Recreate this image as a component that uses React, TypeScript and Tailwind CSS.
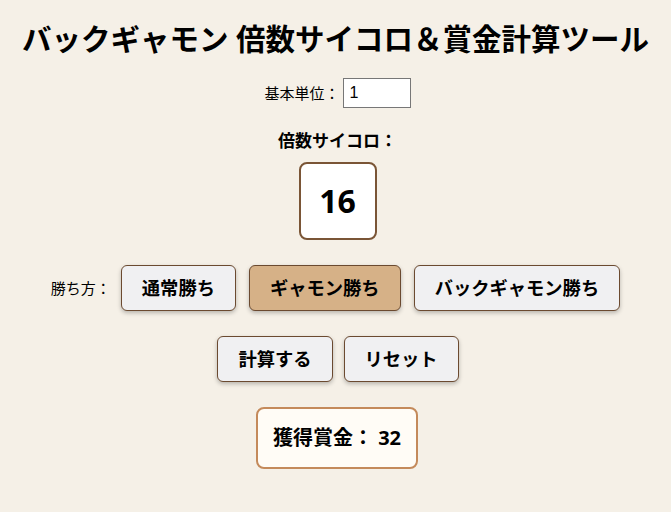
import { useState } from 'react';

const multipliers = { normal: 1, gammon: 2, backgammon: 3 } as const;
type WinType = keyof typeof multipliers;

const winButtons: { key: WinType; label: string }[] = [
    { key: 'normal', label: '通常勝ち' },
    { key: 'gammon', label: 'ギャモン勝ち' },
    { key: 'backgammon', label: 'バックギャモン勝ち' },
];

export default function App() {
    const [unit, setUnit] = useState('1');
    const [cube] = useState(16);
    const [winType, setWinType] = useState<WinType>('gammon');
    const [prize, setPrize] = useState<number | null>(32);

    const calculate = () => {
        const u = Number(unit) || 0;
        setPrize(u * cube * multipliers[winType]);
    };

    const reset = () => {
        setUnit('1');
        setWinType('normal');
        setPrize(null);
    };

    const btn = 'px-5 py-2.5 leading-6 text-[18.3px] font-bold text-black border border-[#6b4a30] rounded-md shadow-[0_2px_4px_rgba(0,0,0,0.25)]';

    return (
        <div className="min-h-screen bg-[#f5f0e7] flex flex-col items-center text-black pb-10" style={{ fontFamily: '"Noto Sans", "Noto Sans CJK JP", sans-serif' }}>
            <h1 className="mt-[21px] text-[29.5px] leading-[36px] font-bold">バックギャモン 倍数サイコロ＆賞金計算ツール</h1>

            <div className="mt-[21px] flex items-center pl-[4px]">
                <span className="text-[15px]" style={{ fontFamily: '"Noto Sans CJK JP", sans-serif' }}>基本単位：</span>
                <input
                    type="number"
                    value={unit}
                    onChange={e => setUnit(e.target.value)}
                    className="ml-[3px] w-[68px] h-[30px] px-[6px] bg-white border border-[#777] text-[16px] outline-none [appearance:textfield]"
                    style={{ fontFamily: '"Liberation Sans", Arial, sans-serif' }}
                />
            </div>

            <div className="mt-[21px] text-[17px] leading-6 font-bold pl-[4px]">倍数サイコロ：</div>
            <div className="mt-[9px] ml-[4px] w-[78px] h-[78px] bg-white border-2 border-[#7a5536] rounded-lg flex items-center justify-center text-[32px] font-bold">
                {cube}
            </div>

            <div className="mt-[25px] flex items-center">
                <span className="text-[15px] mr-[10px]" style={{ fontFamily: '"Noto Sans CJK JP", sans-serif' }}>勝ち方：</span>
                <div className="flex gap-[13px]">
                    {winButtons.map(b => (
                        <button
                            key={b.key}
                            onClick={() => setWinType(b.key)}
                            className={`${btn} ${winType === b.key ? 'bg-[#d6b187]' : 'bg-[#f0f0f2]'}`}
                        >
                            {b.label}
                        </button>
                    ))}
                </div>
            </div>

            <div className="mt-[25px] ml-[5px] flex gap-[11px]">
                <button onClick={calculate} className={`${btn} bg-[#f0f0f2]`}>計算する</button>
                <button onClick={reset} className={`${btn} bg-[#f0f0f2]`}>リセット</button>
            </div>

            <div className="mt-[25px] ml-[3px] px-[15px] py-[15px] bg-[#fffcf6] border-2 border-[#c48a5b] rounded-lg text-[20px] leading-7 font-bold">
                獲得賞金： {prize ?? 0}
            </div>
        </div>
    );
}
